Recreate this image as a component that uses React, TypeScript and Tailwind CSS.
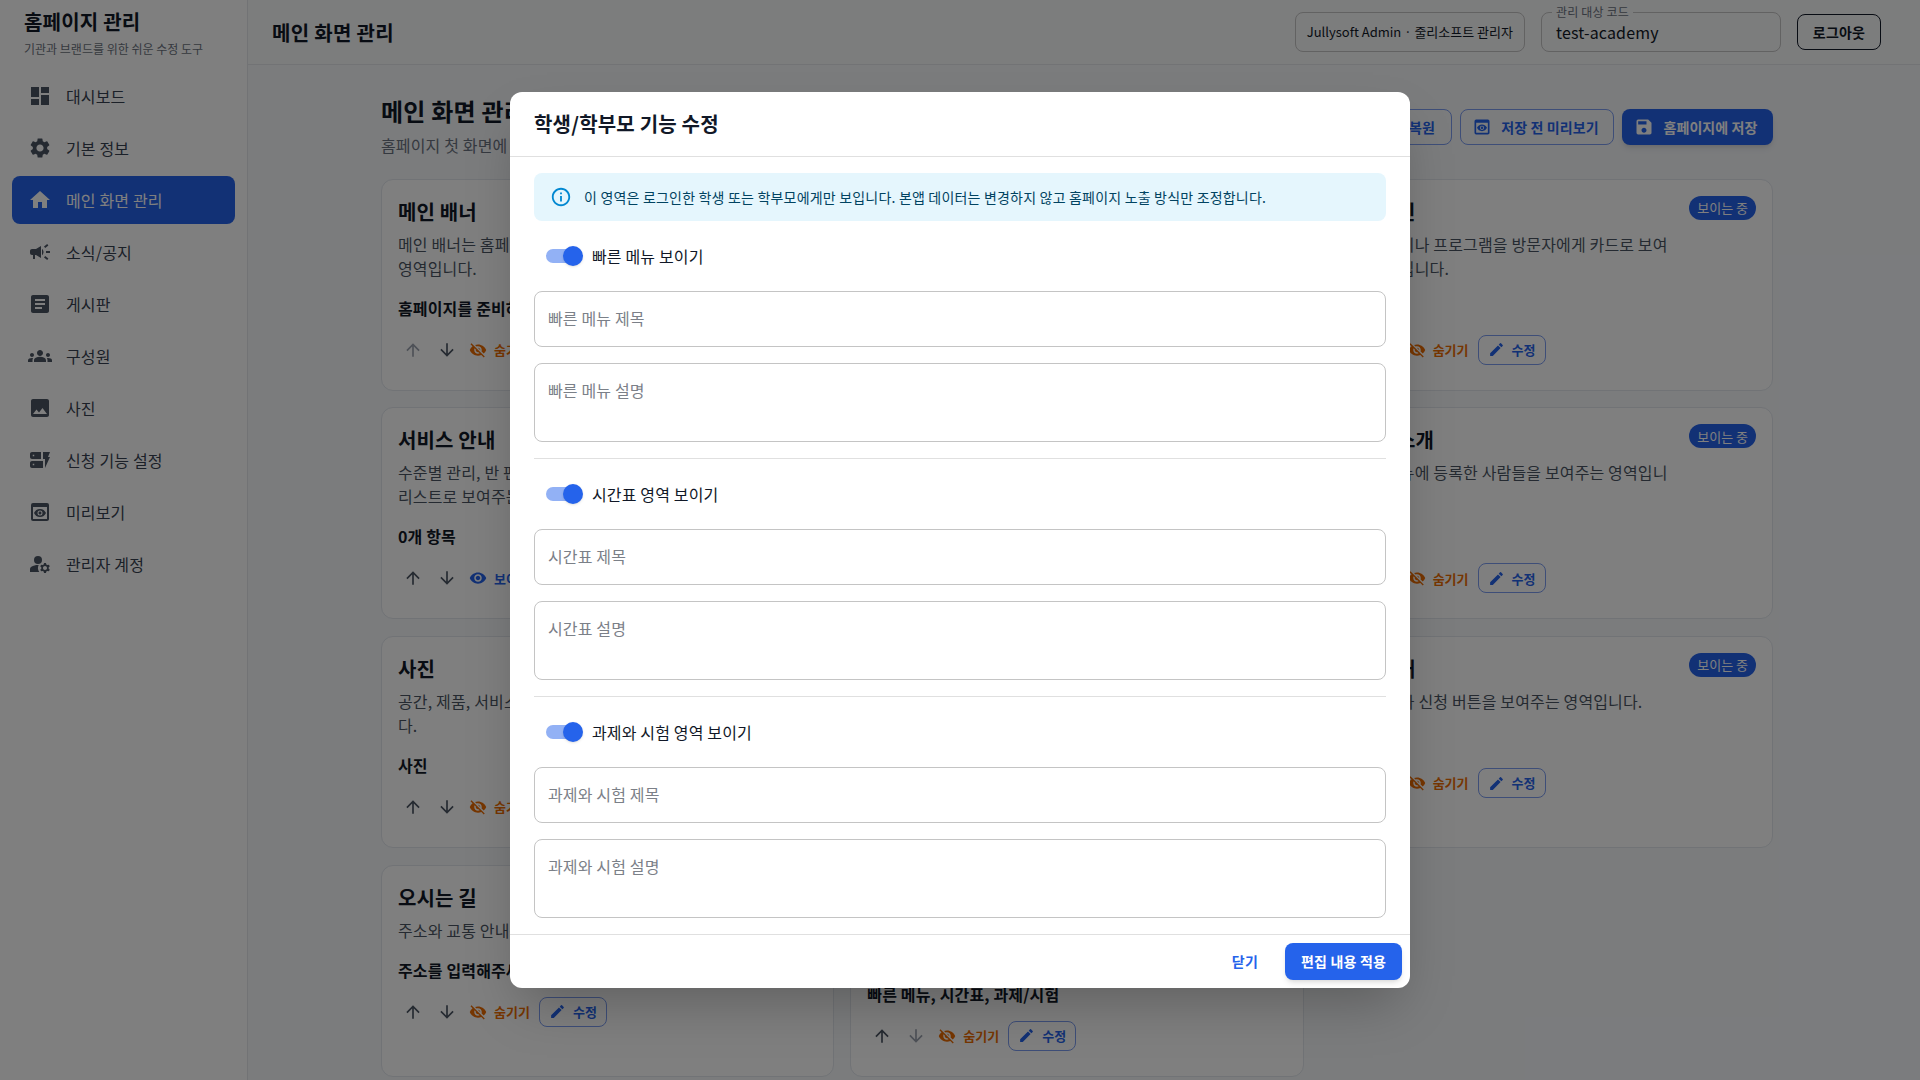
import {
  MdArrowDownward,
  MdArrowUpward,
  MdArticle,
  MdCampaign,
  MdDashboard,
  MdDynamicForm,
  MdEdit,
  MdGroups,
  MdHome,
  MdImage,
  MdInfoOutline,
  MdManageAccounts,
  MdPreview,
  MdRestore,
  MdSave,
  MdSettings,
  MdVisibility,
  MdVisibilityOff,
} from 'react-icons/md';

const menu = [
  { label: '대시보드', icon: MdDashboard },
  { label: '기본 정보', icon: MdSettings },
  { label: '메인 화면 관리', icon: MdHome, active: true },
  { label: '소식/공지', icon: MdCampaign },
  { label: '게시판', icon: MdArticle },
  { label: '구성원', icon: MdGroups },
  { label: '사진', icon: MdImage },
  { label: '신청 기능 설정', icon: MdDynamicForm },
  { label: '미리보기', icon: MdPreview },
  { label: '관리자 계정', icon: MdManageAccounts },
];

type Card = {
  title: string;
  desc: string[];
  sub: string;
  visible?: boolean;
  upDisabled?: boolean;
  downDisabled?: boolean;
};

const cards: Card[] = [
  { title: '메인 배너', desc: ['메인 배너는 홈페이지 첫 화면에서 가장 먼저 보이는', '영역입니다.'], sub: '홈페이지를 준비하고 있습니다', upDisabled: true },
  { title: '소개 문구', desc: ['기관과 브랜드를 소개하는 문구를 보여주는 영역입니다.', '내용입니다.'], sub: '소개' },
  { title: '교육 라인', desc: ['주요 수업이나 프로그램을 방문자에게 카드로 보여', '주는 영역입니다.'], sub: '' },
  { title: '서비스 안내', desc: ['수준별 관리, 반 편성 등 서비스 내용을 카드나', '리스트로 보여주는 영역입니다.'], sub: '0개 항목', visible: true },
  { title: '공지사항', desc: ['최근 소식과 공지를 목록으로 보여주는 영역입니다.', '내용입니다.'], sub: '공지' },
  { title: '구성원 소개', desc: ['구성원 메뉴에 등록한 사람들을 보여주는 영역입니', '다.'], sub: '' },
  { title: '사진', desc: ['공간, 제품, 서비스 사진을 모아 보여주는 영역입니', '다.'], sub: '사진' },
  { title: '게시판', desc: ['게시판의 최근 글을 보여주는 영역입니다.', '내용입니다.'], sub: '게시판' },
  { title: '신청 안내', desc: ['안내 문구와 신청 버튼을 보여주는 영역입니다.'], sub: '' },
  { title: '오시는 길', desc: ['주소와 교통 안내를 보여주는 영역입니다.'], sub: '주소를 입력해주세요' },
  { title: '학생/학부모 기능', desc: ['로그인한 학생과 학부모에게 보이는 기능을 모아', '보여주는 영역입니다.'], sub: '빠른 메뉴, 시간표, 과제/시험', downDisabled: true },
];

const sections = [
  { toggle: '빠른 메뉴 보이기', title: '빠른 메뉴 제목', desc: '빠른 메뉴 설명' },
  { toggle: '시간표 영역 보이기', title: '시간표 제목', desc: '시간표 설명' },
  { toggle: '과제와 시험 영역 보이기', title: '과제와 시험 제목', desc: '과제와 시험 설명' },
];

function HomeCard({ card }: { card: Card }) {
  return (
    <div className="relative h-[212px] rounded-xl border border-[#e2e6ec] bg-white px-[16px] pt-[16px]">
      <div className="flex items-start justify-between">
        <h3 className="text-xl leading-[32px] font-bold tracking-[0.15px] text-[#111827]">{card.title}</h3>
        <span className="flex h-6 items-center rounded-full bg-[#2563eb] px-[8px] text-[13px] text-white">보이는 중</span>
      </div>
      <div className="mt-[4px] text-base leading-[24px] tracking-[0.15px] text-[#4b5563]">
        {card.desc.map((line) => (
          <p key={line} className="whitespace-nowrap">{line}</p>
        ))}
      </div>
      <p className="mt-[16px] h-[24px] whitespace-nowrap text-base leading-[24px] font-bold tracking-[0.15px] text-[#111827]">{card.sub}</p>
      <div className="mt-[14px] flex h-[32px] items-center">
        <MdArrowUpward className={card.upDisabled ? 'ml-[5px] text-[#9ca3af]' : 'ml-[5px] text-[#4b5563]'} size={20} />
        <MdArrowDownward className={card.downDisabled ? 'ml-[14px] text-[#9ca3af]' : 'ml-[14px] text-[#4b5563]'} size={20} />
        <span className={card.visible ? 'ml-[12px] flex items-center gap-[7px] text-[13px] font-bold text-[#2563eb]' : 'ml-[12px] flex items-center gap-[7px] text-[13px] font-bold text-[#ed6c02]'}>
          {card.visible ? <MdVisibility size={18} /> : <MdVisibilityOff size={18} />}
          {card.visible ? '보이기' : '숨기기'}
        </span>
        <button className="ml-[9px] flex h-[30px] w-[68px] items-center justify-center gap-[7px] rounded-lg border border-[#7c9cf0] text-[13px] font-bold text-[#2563eb]">
          <MdEdit size={17} />
          수정
        </button>
      </div>
    </div>
  );
}

export default function App() {
  return (
    <div className="relative flex h-[1080px] w-[1920px] overflow-hidden bg-[#f6f8fb] font-['Noto_Sans_CJK_KR',sans-serif] text-[#111827]">
      <aside className="w-[248px] shrink-0 border-r border-[#e5e7eb] bg-white">
        <div className="h-[72px] pl-[24px] pt-[7px]">
          <h1 className="text-xl leading-[30px] font-bold tracking-[0.2px]">홈페이지 관리</h1>
          <p className="mt-[3px] text-xs leading-[18px] text-[#6b7280]">기관과 브랜드를 위한 쉬운 수정 도구</p>
        </div>
        <nav className="flex flex-col gap-1 px-3">
          {menu.map((item) => {
            const Icon = item.icon;
            return (
              <div
                key={item.label}
                className={item.active ? 'flex h-12 items-center rounded-lg bg-[#2563eb] pl-[16px] text-white' : 'flex h-12 items-center rounded-lg pl-[16px] text-[#374151]'}
              >
                <Icon size={24} className={item.active ? 'text-white' : 'text-[#4b5563]'} />
                <span className="ml-[14px] text-base tracking-[0.15px]">{item.label}</span>
              </div>
            );
          })}
        </nav>
      </aside>

      <div className="flex min-w-0 flex-1 flex-col">
        <header className="flex h-[65px] shrink-0 items-center border-b border-[#e5e7eb] bg-[#f9fafb] pl-[24px] pr-[39px]">
          <h2 className="pt-[1px] text-xl font-bold tracking-[0.3px]">메인 화면 관리</h2>
          <div className="ml-auto flex h-[40px] items-center rounded-lg border border-[#c4c4c4] px-[11px] text-[13px]">Jullysoft Admin · 줄리소프트 관리자</div>
          <div className="relative ml-4 flex h-[40px] w-[240px] items-center rounded-lg border border-[#c4c4c4] pl-[14px] text-base tracking-[0.15px]">
            test-academy
            <span className="absolute -top-[9px] left-[10px] bg-[#f9fafb] px-[4px] text-xs leading-[16px] text-[#6b7280]">관리 대상 코드</span>
          </div>
          <button className="ml-4 h-9 w-[84px] rounded-lg border border-[#111827] text-sm font-bold tracking-[0.2px]">로그아웃</button>
        </header>

        <main className="pl-[133px] pt-[28px]">
          <div className="flex w-[1392px] items-start justify-between">
            <div>
              <h2 className="text-2xl leading-[36px] font-bold tracking-[0.2px]">메인 화면 관리</h2>
              <p className="mt-[4px] text-base leading-[24px] tracking-[0.15px] text-[#6b7280]">홈페이지 첫 화면에 보일 영역을 정리합니다.</p>
            </div>
            <div className="mt-[16px] flex gap-2">
              <button className="flex h-9 items-center gap-2 rounded-lg border border-[#7c9cf0] px-[16px] text-sm font-bold tracking-[0.1px] text-[#2563eb]">
                <MdRestore size={20} />
                초기 상태로 복원
              </button>
              <button className="flex h-9 w-[154px] items-center justify-center gap-[9px] rounded-lg border border-[#7c9cf0] pr-[3px] text-sm font-bold tracking-[0.1px] text-[#2563eb]">
                <MdPreview size={20} />
                저장 전 미리보기
              </button>
              <button className="flex h-9 w-[151px] items-center justify-center gap-[9px] rounded-lg bg-[#2563eb] pr-[3px] text-sm font-bold tracking-[0.1px] text-white shadow-md">
                <MdSave size={20} />
                홈페이지에 저장
              </button>
            </div>
          </div>
          <div className="mt-[21.5px] grid w-[1392px] grid-cols-3 gap-x-4 gap-y-[16.8px]">
            {cards.map((card) => (
              <HomeCard key={card.title} card={card} />
            ))}
          </div>
        </main>
      </div>

      {/* 모달 */}
      <div className="absolute inset-0 flex items-start justify-center bg-black/50 pt-[92px]">
        <div className="flex h-[896px] w-[900px] flex-col rounded-xl bg-white shadow-2xl">
          <div className="flex h-[65px] shrink-0 items-center border-b border-[#e0e0e0] px-[24px]">
            <h2 className="text-xl font-bold tracking-[0.2px] text-[#111827]">학생/학부모 기능 수정</h2>
          </div>
          <div className="flex flex-1 flex-col gap-4 px-[24px] pt-[16px]">
            <div className="flex h-[48px] items-center rounded-lg bg-[#e5f6fd] pl-[16px] text-sm tracking-[0.19px] text-[#014361]">
              <MdInfoOutline size={22} className="text-[#0288d1]" />
              <span className="ml-[12px]">이 영역은 로그인한 학생 또는 학부모에게만 보입니다. 본앱 데이터는 변경하지 않고 홈페이지 노출 방식만 조정합니다.</span>
            </div>
            {sections.map((section, i) => (
              <div key={section.toggle} className="flex flex-col gap-4">
                {i > 0 && <hr className="border-[#e0e0e0]" />}
                <div className="flex h-[38px] items-center pl-[12px]">
                  <span className="relative block h-[14px] w-[34px] rounded-full bg-[#92b1f5]">
                    <span className="absolute -top-[3px] left-[17px] block h-5 w-5 rounded-full bg-[#2563eb] shadow" />
                  </span>
                  <span className="ml-[12px] text-base tracking-[0.15px] text-[#111827]">{section.toggle}</span>
                </div>
                <input placeholder={section.title} className="h-[56px] w-full rounded-lg border border-[#c4c4c4] px-[13px] pb-[2px] text-base tracking-[0.15px] placeholder:text-[#7b8088]" />
                <textarea placeholder={section.desc} className="block h-[79px] w-full resize-none rounded-lg border border-[#c4c4c4] px-[13px] py-[14px] text-base leading-[24px] tracking-[0.15px] placeholder:text-[#7b8088]" />
              </div>
            ))}
          </div>
          <div className="flex h-[54px] shrink-0 items-center justify-end gap-[27px] border-t border-[#e0e0e0] pb-[1px] pr-[8px]">
            <button className="text-sm font-bold tracking-[0.2px] text-[#2563eb]">닫기</button>
            <button className="h-[37px] w-[117px] rounded-lg bg-[#2563eb] text-sm font-bold tracking-[0.2px] text-white shadow-md">편집 내용 적용</button>
          </div>
        </div>
      </div>
    </div>
  );
}
